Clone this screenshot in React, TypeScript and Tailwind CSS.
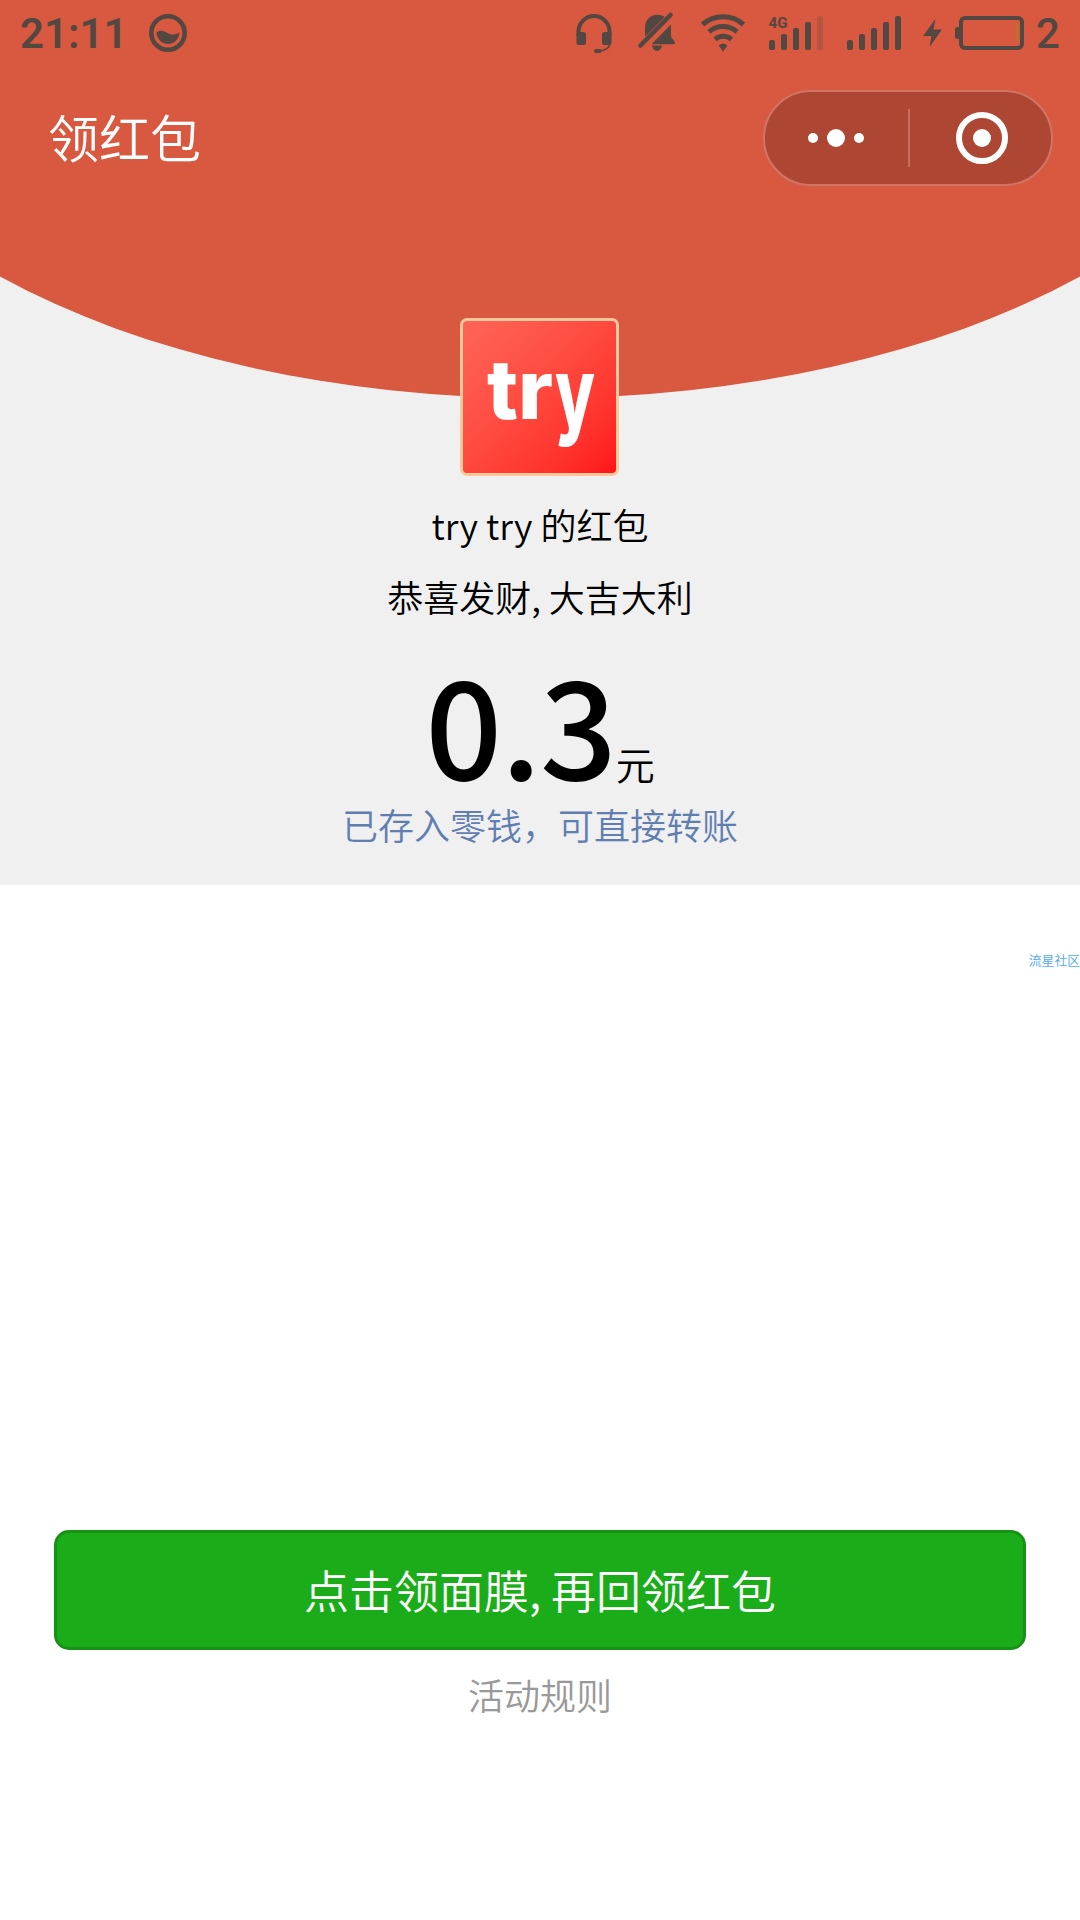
import React from "react";

const BAR_COLOR = "#534741";

// Biểu tượng trên thanh trạng thái
function StatusIcons() {
  return (
    <svg width="476" height="66" viewBox="560 0 476 66" fill={BAR_COLOR}>
      {/* Tai nghe */}
      <path d="M578.500 36V31.500a15.500 15.500 0 0 1 31 0V36" fill="none" stroke={BAR_COLOR} strokeWidth="4" />
      <rect x="576.500" y="32" width="9.500" height="13" rx="2.500" />
      <rect x="602" y="32" width="9.500" height="13" rx="2.500" />
      <path d="M610 43c-.5 5-3.500 7.500-11 8" fill="none" stroke={BAR_COLOR} strokeWidth="1.600" />
      <rect x="594" y="49" width="7.500" height="4" rx="2" />
      {/* Chuông tắt */}
      <path d="M645 35V27.500c0-7 5-12.800 12-12.800 3 0 5.600.8 7.700 2.300L645.500 36.500zM671 24.500V37l3.500 4.200c1 1.300.3 3-1.300 3H651.500z" />
      <path d="M652 45.500h10c-.5 3.300-2.500 5.500-5 5.500s-4.500-2.200-5-5.500z" />
      <path d="M640.500 45.500L670.500 15" fill="none" stroke={BAR_COLOR} strokeWidth="4.600" strokeLinecap="round" />
      {/* Wifi */}
      <g fill="none" stroke={BAR_COLOR} strokeWidth="5">
        <path d="M702.500 24.500a31 31 0 0 1 41 0" />
        <path d="M709 31.800a21.500 21.500 0 0 1 28 0" />
        <path d="M715 39.300a12.800 12.800 0 0 1 16.500 0" />
      </g>
      <path d="M718.800 45.500c2.500-2.200 6-2.200 8.500 0l-4.200 6.200z" />
      {/* Sóng 4G */}
      <text x="768.500" y="27.500" fontSize="15.500" fontWeight="700" fontFamily="Roboto, sans-serif" textLength="19" lengthAdjust="spacingAndGlyphs">4G</text>
      <rect x="769" y="40" width="6" height="10" rx="2" />
      <rect x="781" y="34" width="6" height="16" rx="2" />
      <rect x="793" y="28" width="6" height="22" rx="2" />
      <rect x="805" y="22" width="6" height="28" rx="2" />
      <rect x="817" y="16" width="6" height="34" rx="2" opacity=".25" />
      {/* Sóng sim 2 */}
      <rect x="847" y="40" width="6" height="10" rx="2" />
      <rect x="859" y="34" width="6" height="16" rx="2" />
      <rect x="871" y="28" width="6" height="22" rx="2" />
      <rect x="883" y="22" width="6" height="28" rx="2" />
      <rect x="895" y="16" width="6" height="34" rx="2" />
      {/* Pin đang sạc */}
      <path d="M935.500 19L923 36h8.500l-2 11L942 29.500h-8.500z" />
      <rect x="961" y="18" width="61" height="30" rx="4" fill="none" stroke={BAR_COLOR} strokeWidth="4" />
      <path d="M960 27h-2.500a2.500 2.500 0 0 0-2.500 2.500v7a2.500 2.500 0 0 0 2.500 2.500H960z" />
      <rect x="1016" y="23" width="1.500" height="19" fill="#9b8420" />
    </svg>
  );
}

function StatusBar() {
  return (
    <div className="flex h-[66px] items-center pl-5 text-[#534741]">
      <span className="w-[128px] pt-[2px] font-[Roboto] text-[42px] leading-[64px] font-semibold">21:11</span>
      <svg width="40" height="40" viewBox="0 0 40 40" className="shrink-0">
        <circle cx="20" cy="20" r="16.700" fill="none" stroke={BAR_COLOR} strokeWidth="4.600" />
        <path d="M8.500 19.500c3-2.500 7-2 10.500.3 4 2.500 7.500 2.200 12.500-.3-.5 6.500-5 11.500-11.500 11.500S9 26 8.500 19.500z" fill={BAR_COLOR} />
      </svg>
      <div className="flex-1" />
      <StatusIcons />
      <span className="w-[44px] pt-[2px] font-[Roboto] text-[42px] leading-[64px] font-medium">2</span>
    </div>
  );
}

function Capsule() {
  return (
    <div className="flex h-24 w-[290px] items-center rounded-full border-2 border-[#d07565] bg-[#ad4633]">
      <div className="flex w-[143px] items-center justify-center gap-[9px] pr-[2px]">
        <span className="size-[10px] rounded-full bg-white" />
        <span className="size-[18px] rounded-full bg-white" />
        <span className="size-[10px] rounded-full bg-white" />
      </div>
      <div className="h-[58px] w-[2px] bg-[#c86d5c]" />
      <div className="flex flex-1 justify-center pl-[3px]">
        <div className="flex size-[52px] items-center justify-center rounded-full border-[6px] border-white">
          <span className="size-[18px] rounded-full bg-white" />
        </div>
      </div>
    </div>
  );
}

function Avatar() {
  return (
    <div className="mr-[1px] h-[158px] w-[159px] overflow-hidden rounded-[7px] border-[3px] border-[#fbc89c] bg-linear-to-br from-[#ff6558] to-[#ff1218]">
      <svg width="153" height="152" viewBox="0 0 153 152">
        <g fill="#fff" fontFamily="Inter, sans-serif" fontWeight="800" fontSize="82">
          <text x="24" y="98" textLength="31" lengthAdjust="spacingAndGlyphs">t</text>
          <text x="55" y="98" textLength="35" lengthAdjust="spacingAndGlyphs">r</text>
          <text x="92" y="106" fontSize="97" textLength="40" lengthAdjust="spacingAndGlyphs">y</text>
        </g>
      </svg>
    </div>
  );
}

export default function App() {
  return (
    <div className="flex h-[1920px] w-[1080px] flex-col overflow-hidden bg-white font-['Noto_Sans_CJK_SC',sans-serif] font-[350]">
      <div className="relative h-[885px] bg-[#f0f0f0]">
        {/* Nền đỏ cong phía sau */}
        <svg className="absolute top-0 left-0" width="1080" height="400" viewBox="0 0 1080 400">
          <path d="M0 0H1080V276.500A750 398 0 0 1 0 276.500Z" fill="#d85940" />
        </svg>
        <div className="relative flex flex-col">
          <StatusBar />
          <div className="flex h-[144px] items-center justify-between pr-[27px] pl-[48px]">
            <h1 className="pb-[4px] text-[51px] leading-[140px] font-[350] text-white">领红包</h1>
            <Capsule />
          </div>
          <div className="flex flex-col items-center pt-[108px] text-black">
            <Avatar />
            <p className="mt-[21px] text-[36px] leading-[54px]">try try 的红包</p>
            <p className="mt-[18px] text-[36px] leading-[54px]">恭喜发财, 大吉大利</p>
            <div className="mt-[18px] flex h-[156px] items-baseline">
              <span className="text-[135px] leading-[160px] font-medium tracking-[-1.2px]">0.3</span>
              <span className="text-[39px]">元</span>
            </div>
            <p className="text-[36px] leading-[54px] text-[#617eb1]">已存入零钱，可直接转账</p>
          </div>
        </div>
      </div>
      <div className="flex h-[645px] justify-end pt-[67px]">
        <span className="h-4 text-[12.8px] leading-4 text-[#4fa8ee]">流星社区</span>
      </div>
      <div className="flex flex-col items-center px-[54px]">
        <button className="h-[120px] w-full rounded-[15px] border-[3px] border-[#179215] bg-[#1aad19] text-[45px] font-[350] text-white">
          点击领面膜, 再回领红包
        </button>
        <a className="mt-[17px] text-[36px] leading-[54px] text-[#999]">活动规则</a>
      </div>
    </div>
  );
}
